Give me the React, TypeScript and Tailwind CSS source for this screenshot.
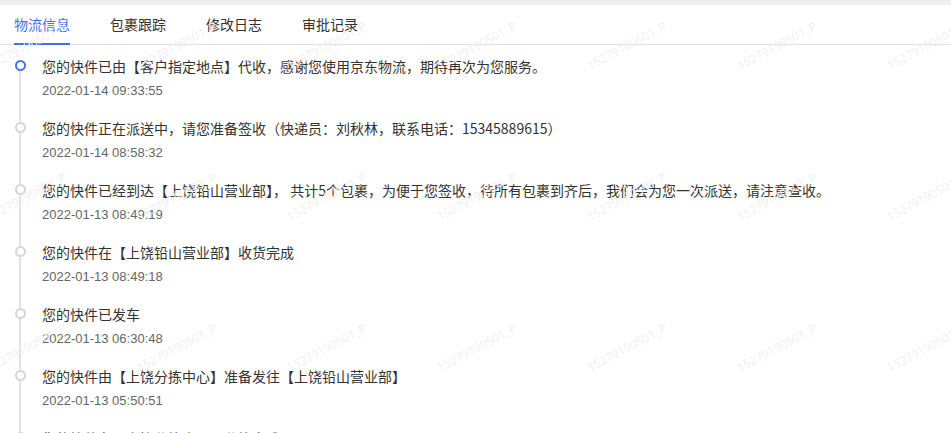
const TABS = ["物流信息", "包裹跟踪", "修改日志", "审批记录"];

const TRACKS = [
  { text: "您的快件已由【客户指定地点】代收，感谢您使用京东物流，期待再次为您服务。", time: "2022-01-14 09:33:55" },
  { text: "您的快件正在派送中，请您准备签收（快递员：刘秋林，联系电话：15345889615）", time: "2022-01-14 08:58:32" },
  { text: "您的快件已经到达【上饶铅山营业部】， 共计5个包裹，为便于您签收，待所有包裹到齐后，我们会为您一次派送，请注意查收。", time: "2022-01-13 08:49:19" },
  { text: "您的快件在【上饶铅山营业部】收货完成", time: "2022-01-13 08:49:18" },
  { text: "您的快件已发车", time: "2022-01-13 06:30:48" },
  { text: "您的快件由【上饶分拣中心】准备发往【上饶铅山营业部】", time: "2022-01-13 05:50:51" },
  { text: "您的快件在【上饶分拣中心】分拣完成", time: "2022-01-13 05:12:07" },
];

export default function App() {
  return (
    <div className="relative h-[433px] w-[951px] overflow-hidden bg-white font-['Noto_Sans_CJK_SC',sans-serif] text-[14px] text-[#333]">
      <div className="h-[5px] bg-[#efefef]" />

      {/* Tabs */}
      <div className="flex h-[40px] gap-[40px] border-b border-[#e0e0e0] px-[14px]">
        {TABS.map((t, i) => (
          <div
            key={t}
            className={`-mb-px flex items-center border-b-2 ${
              i === 0 ? "border-[#3f6ff2] text-[#4172f2]" : "border-transparent text-[#333]"
            }`}
          >
            {t}
          </div>
        ))}
      </div>

      {/* Timeline */}
      <ul>
        {TRACKS.map((item, i) => (
          <li key={item.time + i} className="flex h-[62px]">
            <div className="flex w-[40px] flex-col items-center">
              <div className={`h-[15px] w-[2px] ${i === 0 ? "bg-transparent" : "bg-[#e2e2e2]"}`} />
              <div
                className={`h-[11px] w-[11px] rounded-full border-2 bg-white ${
                  i === 0 ? "border-[#4573f0]" : "border-[#d6d6d6]"
                }`}
              />
              <div className="w-[2px] flex-1 bg-[#e2e2e2]" />
            </div>
            <div className="ml-[2px] pt-[10px]">
              <div className="h-[22px] whitespace-nowrap leading-[22px]">{item.text}</div>
              <div className="mt-[5px] h-[18px] font-['Liberation_Sans',sans-serif] text-[13px] leading-[18px] text-[#666]">
                {item.time}
              </div>
            </div>
          </li>
        ))}
      </ul>

      {/* Watermark */}
      <div className="pointer-events-none absolute left-[-48px] top-[-30px] grid auto-rows-[151px] grid-cols-[repeat(7,150px)]">
        {Array.from({ length: 21 }).map((_, i) => (
          <div key={i} className="flex items-center justify-center">
            <span className="-rotate-[28deg] whitespace-nowrap font-['Open_Sans',sans-serif] text-[12px] text-[#efefef]">
              15279190501_P
            </span>
          </div>
        ))}
      </div>
    </div>
  );
}
